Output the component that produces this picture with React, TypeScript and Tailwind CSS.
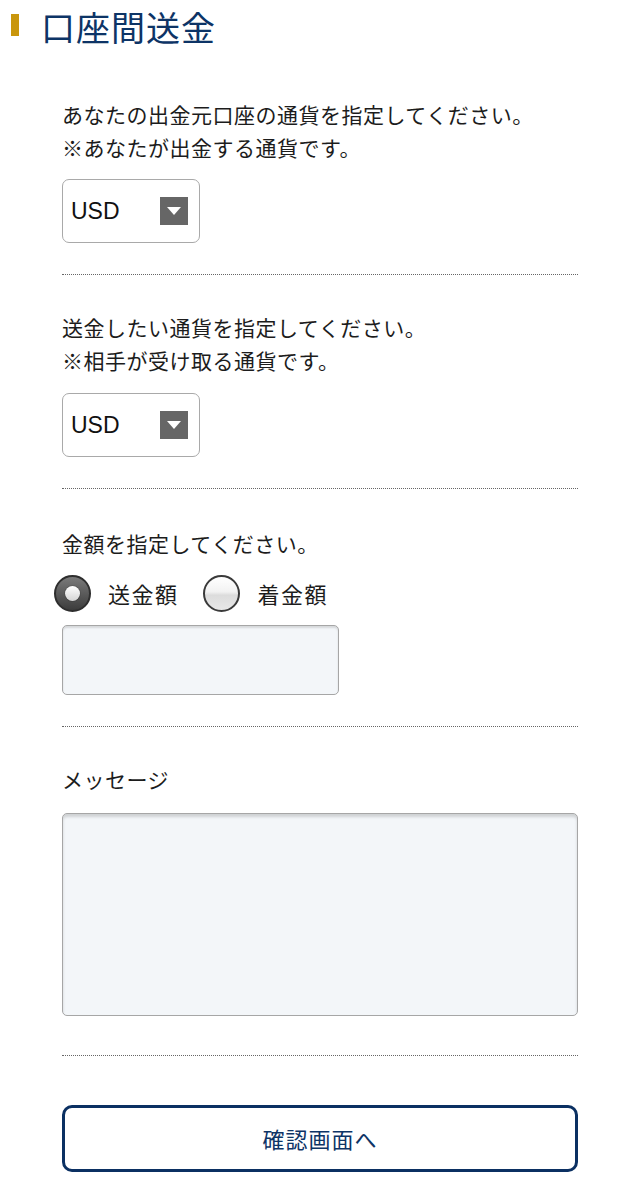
import React from "react";

const jp = { fontFamily: '"Noto Sans CJK JP", "Noto Sans", sans-serif' };

function Select() {
  return (
    <div className="flex h-[64px] w-[138px] items-center justify-between rounded-[7px] border border-[#a9a9a9] bg-white pl-[8px] pr-[11px]">
      <span className="text-[23px] text-[#111]" style={{ fontFamily: '"Liberation Sans", Arial, sans-serif' }}>
        USD
      </span>
      <span className="flex h-[28px] w-[28px] items-center justify-center bg-[#666]">
        <svg width="14" height="8" viewBox="0 0 14 8">
          <polygon points="0,0 14,0 7,8" fill="#fff" />
        </svg>
      </span>
    </div>
  );
}

function Dotted() {
  return <div className="border-t border-dotted border-[#666]" />;
}

function RadioOn() {
  return (
    <span className="flex h-[37px] w-[37px] items-center justify-center rounded-full border-[2px] border-[#2e2e2e] bg-[linear-gradient(#7a7a7a,#3c3c3c)]">
      <span className="h-[15px] w-[15px] rounded-full bg-[linear-gradient(#ffffff,#d4d4d4)] shadow-[0_0_1px_#000]" />
    </span>
  );
}

function RadioOff() {
  return (
    <span className="block h-[37px] w-[37px] rounded-full border-[2px] border-[#3a3a3a] bg-[linear-gradient(#ffffff_0%,#f2f2f2_45%,#dcdcdc_55%,#e8e8e8_100%)]" />
  );
}

export default function App() {
  return (
    <div className="min-h-[1180px] w-[640px] bg-white text-[#1c1c1c]" style={jp}>
      <div className="flex h-[54px] items-center">
        <span className="ml-[11px] mt-[-5px] h-[22px] w-[8px] bg-[#c9960c]" />
        <h1 className="ml-[22px] mt-[-1px] text-[34px] leading-[40px] tracking-[1px] text-[#0d3466]">口座間送金</h1>
      </div>

      <div className="px-[62px]">
        <div className="pt-[44px] pb-[31px]">
          <p className="text-[21px] leading-[33px] tracking-[0.5px]">
            あなたの出金元口座の通貨を指定してください。
            <br />
            ※あなたが出金する通貨です。
          </p>
          <div className="mt-[15px]">
            <Select />
          </div>
        </div>
        <Dotted />

        <div className="pt-[36px] pb-[31px]">
          <p className="text-[21px] leading-[33px] tracking-[0.5px]">
            送金したい通貨を指定してください。
            <br />
            ※相手が受け取る通貨です。
          </p>
          <div className="mt-[16px]">
            <Select />
          </div>
        </div>
        <Dotted />

        <div className="pt-[38px] pb-[31px]">
          <p className="text-[21px] leading-[33px] tracking-[0.5px]">金額を指定してください。</p>
          <div className="ml-[-8px] mt-[15px] flex items-center">
            <RadioOn />
            <span className="ml-[17px] text-[22px] leading-[33px] tracking-[1.5px]">送金額</span>
            <span className="ml-[24px]">
              <RadioOff />
            </span>
            <span className="ml-[18px] text-[22px] leading-[33px] tracking-[1.5px]">着金額</span>
          </div>
          <div className="mt-[13px] h-[70px] w-[277px] rounded-[5px] border border-[#a6a6a6] bg-[#f3f6f9] shadow-[inset_0_2px_2px_rgba(0,0,0,0.12)]" />
        </div>
        <Dotted />

        <div className="pt-[36px] pb-[39px]">
          <p className="text-[21px] leading-[33px] tracking-[0.5px]">メッセージ</p>
          <div className="mt-[17px] h-[203px] w-full rounded-[5px] border border-[#a6a6a6] bg-[#f3f6f9] shadow-[inset_0_3px_3px_rgba(0,0,0,0.15)]" />
        </div>
        <Dotted />

        <button className="mt-[49px] flex h-[67px] w-full items-center justify-center rounded-[10px] border-[3px] border-[#0b3062] bg-white text-[22px] tracking-[1px] text-[#0d3466]">
          確認画面へ
        </button>
      </div>
    </div>
  );
}
